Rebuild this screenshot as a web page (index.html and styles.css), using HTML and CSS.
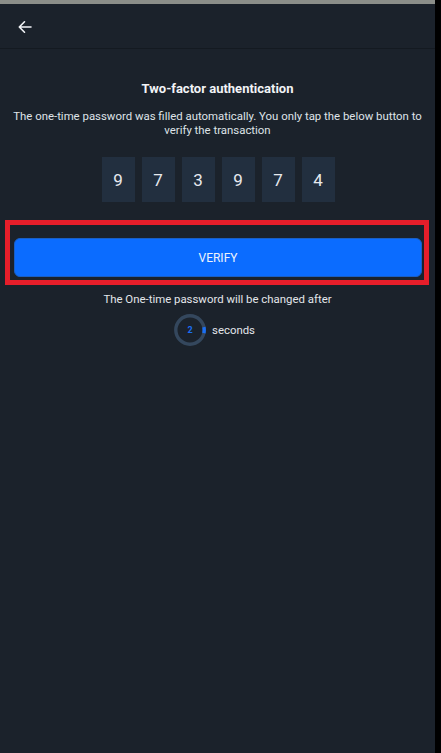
FILE: index.html
```html
<!DOCTYPE html>
<html>
	<head>
		<meta charset="utf-8">
		<meta name="viewport" content="width=device-width, initial-scale=1">
		<link rel="stylesheet" href="styles.css">
	</head>
	<body>
		<div class="screen">
			<div class="statusbar"></div>
			<div class="header">
				<svg class="back" width="16" height="16" viewBox="0 0 16 16">
					<path d="M14 8H2.5M7.5 2.8L2.3 8l5.2 5.2" fill="none" stroke="#f2f4f7" stroke-width="1.6" stroke-linecap="round" stroke-linejoin="round"/>
				</svg>
			</div>
			<div class="content">
				<h1 class="title">Two-factor authentication</h1>
				<p class="info">The one-time password was filled automatically. You only tap the below button to verify the transaction</p>
				<div class="otp">
					<span class="digit">9</span>
					<span class="digit">7</span>
					<span class="digit">3</span>
					<span class="digit">9</span>
					<span class="digit">7</span>
					<span class="digit">4</span>
				</div>
				<div class="highlight">
					<button class="verify">VERIFY</button>
				</div>
				<p class="note">The One-time password will be changed after</p>
				<div class="timer">
					<div class="ring">
						<svg width="32" height="32" viewBox="0 0 32 32">
							<circle cx="16" cy="16" r="14.2" fill="none" stroke="#34475d" stroke-width="3.4"/>
							<circle cx="16" cy="16" r="14.2" fill="none" stroke="#1a6ff5" stroke-width="3.4" stroke-dasharray="6 100" transform="rotate(-12 16 16)"/>
						</svg>
						<span class="count">2</span>
					</div>
					<span class="unit">seconds</span>
				</div>
			</div>
		</div>
		<div class="edge"></div>
	</body>
</html>
```

FILE: styles.css
```css
html, body {
	margin: 0;
	padding: 0;
	background: #000;
}
body {
	display: flex;
	font-family: Roboto, "Noto Sans", sans-serif;
	color: #e9ecf0;
}
.screen {
	width: 435px;
	height: 753px;
	background: #1b222b;
	display: flex;
	flex-direction: column;
}
.edge {
	width: 6px;
	height: 753px;
	background: #000;
}
.statusbar {
	height: 4px;
	background: #8b8e89;
}
.header {
	height: 44px;
	border-bottom: 1px solid #141a21;
	display: flex;
	align-items: center;
	padding-left: 17px;
}
.back {
	margin-top: 1px;
}
.content {
	display: flex;
	flex-direction: column;
	align-items: center;
}
.title {
	margin: 31px 0 0;
	font-size: 13px;
	line-height: 17px;
	font-weight: bold;
	color: #f2f4f7;
}
.info {
	margin: 12px 0 0;
	padding: 0 12px;
	font-size: 11.4px;
	line-height: 14px;
	text-align: center;
	color: #dfe3e8;
}
.otp {
	margin-top: 20px;
	display: flex;
	gap: 7px;
	padding-left: 1px;
}
.digit {
	width: 33px;
	height: 45px;
	background: #222f3f;
	display: flex;
	align-items: center;
	justify-content: center;
	font-size: 17px;
	color: #e6e9ee;
}
.highlight {
	margin-top: 18px;
	align-self: flex-start;
	margin-left: 5px;
	width: 408px;
	border: 5px solid #e61e2a;
	padding: 13px 2px 3px 4px;
}
.verify {
	display: block;
	width: 408px;
	height: 39px;
	border: 1px solid #1a5fc4;
	border-radius: 6px;
	background: #0b6cff;
	color: #eef3fb;
	font-family: Roboto, "Noto Sans", sans-serif;
	font-size: 12px;
	font-weight: normal;
	padding: 0;
}
.note {
	margin: 7px 0 0;
	font-size: 11.4px;
	line-height: 14px;
	color: #e3e6ea;
}
.timer {
	margin-top: 8px;
	display: flex;
	align-items: center;
	gap: 6px;
	margin-right: 6px;
}
.ring {
	position: relative;
	width: 32px;
	height: 32px;
}
.ring svg {
	display: block;
}
.count {
	position: absolute;
	top: 0;
	left: 0;
	width: 32px;
	line-height: 32px;
	text-align: center;
	font-size: 9px;
	font-weight: bold;
	color: #1a6ff5;
}
.unit {
	font-size: 11.4px;
	color: #e3e6ea;
}
```
